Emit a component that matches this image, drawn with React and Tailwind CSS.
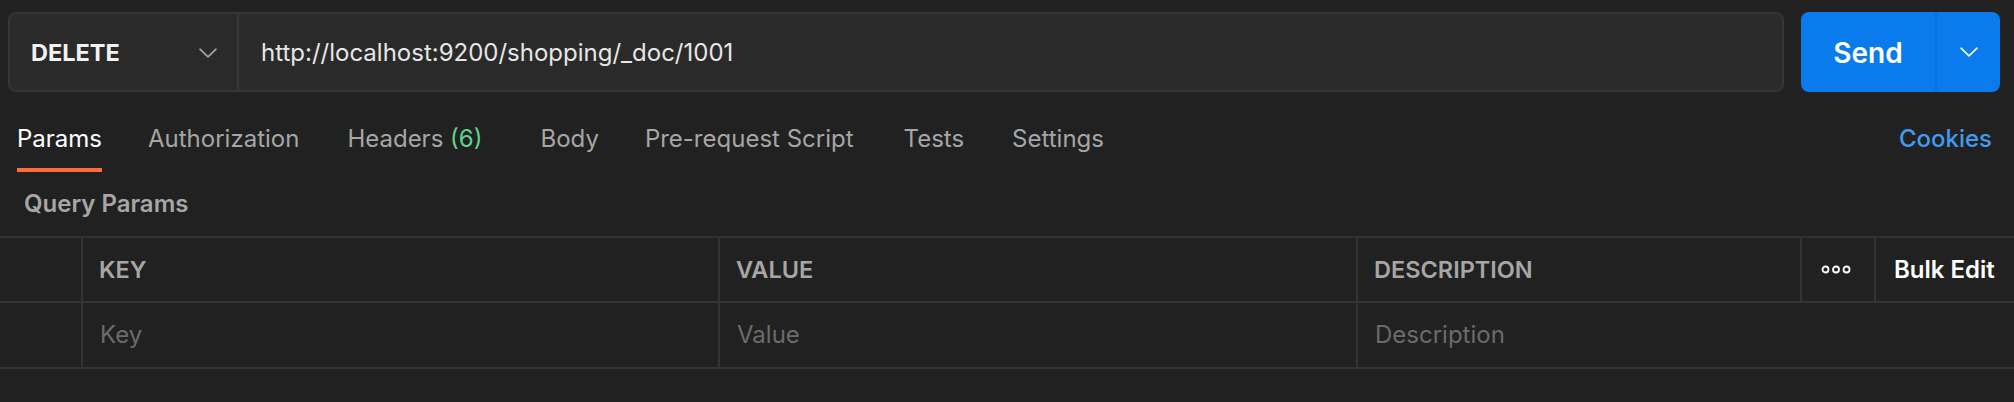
import React from "react";

const font = { fontFamily: "Inter, 'Noto Sans', sans-serif" };

function Chevron({ className }) {
  return (
    <svg className={className} viewBox="0 0 18 10" fill="none" stroke="currentColor" strokeWidth="1.6" strokeLinecap="round" strokeLinejoin="round">
      <path d="M1 1.2 L9 8.8 L17 1.2" />
    </svg>
  );
}

function Dots() {
  return (
    <svg width="30" height="9" viewBox="0 0 30 9" fill="none" stroke="#ffffff" strokeWidth="1.8">
      <circle cx="4.5" cy="4.5" r="3" />
      <circle cx="15" cy="4.5" r="3" />
      <circle cx="25.5" cy="4.5" r="3" />
    </svg>
  );
}

function Tab({ children, active, extra }) {
  return (
    <div className={`flex flex-col items-start ${extra || ""}`}>
      <div className={`h-[30px] leading-[30px] text-[24px] whitespace-nowrap ${active ? "text-white" : "text-[#a6a6a6]"}`}>
        {children}
      </div>
      <div className={`mt-[14px] h-[4px] w-full ${active ? "bg-[#ff6c37]" : "bg-transparent"}`} />
    </div>
  );
}

export default function App() {
  return (
    <div className="w-full h-[402px] bg-[#212121] overflow-hidden" style={font}>
      {/* Top bar */}
      <div className="flex pt-[12px] pl-[8px] pr-[14px] gap-[17px]">
        <div className="flex flex-1 h-[80px] rounded-[8px] border-2 border-[#363636] bg-[#2a2a2a] overflow-hidden">
          <div className="flex items-center justify-between w-[229px] border-r-2 border-[#363636] pl-[21px] pr-[20px] pt-[2px]">
            <span className="text-[23.5px] font-bold text-[#f2f2f2]">DELETE</span>
            <Chevron className="w-[18px] h-[10px] text-[#a6a6a6]" />
          </div>
          <div className="flex items-center pl-[22px] pt-[2px] text-[24px] text-[#e6e6e6]">
            http://localhost:9200/shopping/_doc/1001
          </div>
        </div>
        <div className="flex h-[80px] w-[199px] rounded-[8px] bg-[#097bed] overflow-hidden">
          <div className="flex items-center justify-center w-[134px] pt-[2px] text-[28px] font-semibold text-white">Send</div>
          <div className="w-[2px] bg-[#0b6fd5]" />
          <div className="flex flex-1 items-center justify-center text-white">
            <Chevron className="w-[18px] h-[10px]" />
          </div>
        </div>
      </div>

      {/* Tabs */}
      <div className="flex items-start justify-between pt-[32px] pl-[17px] pr-[22px]">
        <div className="flex items-start">
          <Tab active>Params</Tab>
          <Tab extra="ml-[46px]">Authorization</Tab>
          <Tab extra="ml-[48px]">
            Headers <span className="text-[#5fd38d]">(6)</span>
          </Tab>
          <Tab extra="ml-[58px]">Body</Tab>
          <Tab extra="ml-[46px]">Pre-request Script</Tab>
          <Tab extra="ml-[50px]">Tests</Tab>
          <Tab extra="ml-[48px]">Settings</Tab>
        </div>
        <div className="h-[30px] leading-[30px] text-[24px] font-medium text-[#3f9cf0]">Cookies</div>
      </div>

      {/* Query Params */}
      <div className="flex items-center h-[64px] pl-[24px] text-[24px] font-semibold text-[#a6a6a6]">Query Params</div>

      {/* Table */}
      <div className="border-t-2 border-[#333333]">
        <div className="flex h-[65px] border-b-2 border-[#333333]">
          <div className="w-[81px] shrink-0" />
          <div className="flex items-center w-[637px] shrink-0 border-l-2 border-[#333333] pl-[16px] text-[23.5px] font-semibold text-[#a6a6a6]">KEY</div>
          <div className="flex items-center w-[638px] shrink-0 border-l-2 border-[#333333] pl-[16px] text-[23.5px] font-semibold text-[#a6a6a6]">VALUE</div>
          <div className="flex items-center w-[444px] shrink-0 border-l-2 border-[#333333] pl-[16px] text-[23.5px] font-semibold text-[#a6a6a6]">DESCRIPTION</div>
          <div className="flex items-center justify-center w-[74px] shrink-0 border-l-2 border-[#333333] pr-[4px]">
            <Dots />
          </div>
          <div className="flex items-center flex-1 border-l-2 border-[#333333] pl-[18px] text-[24px] font-semibold text-white whitespace-nowrap">Bulk Edit</div>
        </div>
        <div className="flex h-[66px] border-b-2 border-[#333333]">
          <div className="w-[81px] shrink-0" />
          <div className="flex items-center w-[637px] shrink-0 border-l-2 border-[#333333] pl-[17px] text-[24px] text-[#6b6b6b]">Key</div>
          <div className="flex items-center w-[638px] shrink-0 border-l-2 border-[#333333] pl-[17px] text-[24px] text-[#6b6b6b]">Value</div>
          <div className="flex items-center flex-1 border-l-2 border-[#333333] pl-[17px] text-[24px] text-[#6b6b6b]">Description</div>
        </div>
      </div>
    </div>
  );
}
